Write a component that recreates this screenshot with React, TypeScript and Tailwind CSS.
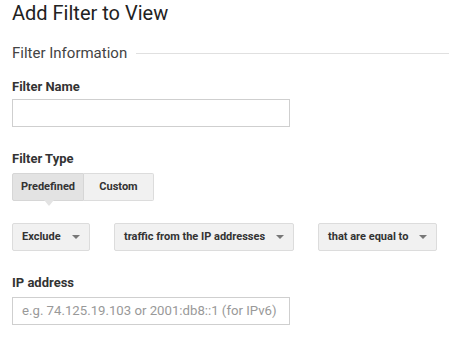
const font = { fontFamily: "Roboto, 'Liberation Sans', sans-serif" };

function Caret() {
  return (
    <svg width="8" height="4" viewBox="0 0 8 4" className="shrink-0">
      <path d="M0 0h8L4 4z" fill="#777" />
    </svg>
  );
}

function Dropdown({ label, width }: { label: string; width: string }) {
  return (
    <div
      className={`${width} h-[28px] flex items-center justify-between pl-[9px] pr-[9px] bg-[#f1f1f1] border border-[#dcdcdc] rounded-[2px] text-[11px] font-bold text-[#333] whitespace-nowrap`}
    >
      <span>{label}</span>
      <Caret />
    </div>
  );
}

export default function App() {
  return (
    <div className="w-[449px] h-[341px] bg-white overflow-hidden" style={font}>
      <div className="pl-[12px]">
        <h1 className="pt-[1px] text-[20px] leading-[25px] text-[#222]">Add Filter to View</h1>

        <div className="mt-[17px] flex items-center gap-[9px]">
          <h2 className="text-[15px] leading-[20px] text-[#444] whitespace-nowrap">Filter Information</h2>
          <div className="flex-1 h-px bg-[#e0e0e0]" />
        </div>

        <label className="block mt-[16px] text-[13px] leading-[16px] font-bold text-[#333]">Filter Name</label>
        <div className="mt-[4px] w-[278px] h-[28px] border border-[#cfcfcf]" />

        <div className="mt-[24px] text-[13px] leading-[16px] font-bold text-[#333]">Filter Type</div>
        <div className="mt-[6px] flex">
          <div className="relative w-[72px] h-[28px] flex items-center justify-center bg-[#e3e3e3] border border-[#d6d6d6] rounded-l-[2px] text-[11px] font-bold text-[#333]">
            Predefined
            <div className="absolute left-[31px] top-[26px] w-0 h-0 border-l-[5px] border-r-[5px] border-t-[6px] border-l-transparent border-r-transparent border-t-[#e3e3e3]" />
          </div>
          <div className="w-[70px] h-[28px] flex items-center justify-center bg-[#f1f1f1] border border-l-0 border-[#dcdcdc] rounded-r-[2px] text-[11px] font-bold text-[#333]">
            Custom
          </div>
        </div>

        <div className="mt-[22px] flex gap-[24px]">
          <Dropdown label="Exclude" width="w-[78px]" />
          <Dropdown label="traffic from the IP addresses" width="w-[180px]" />
          <Dropdown label="that are equal to" width="w-[119px]" />
        </div>

        <div className="mt-[24px] text-[13px] leading-[16px] font-bold text-[#333]">IP address</div>
        <div className="mt-[6px] w-[278px] h-[28px] border border-[#cfcfcf] flex items-center pl-[9px] text-[13.2px] text-[#999] whitespace-nowrap">
          e.g. 74.125.19.103 or 2001:db8::1 (for IPv6)
        </div>
      </div>
    </div>
  );
}
